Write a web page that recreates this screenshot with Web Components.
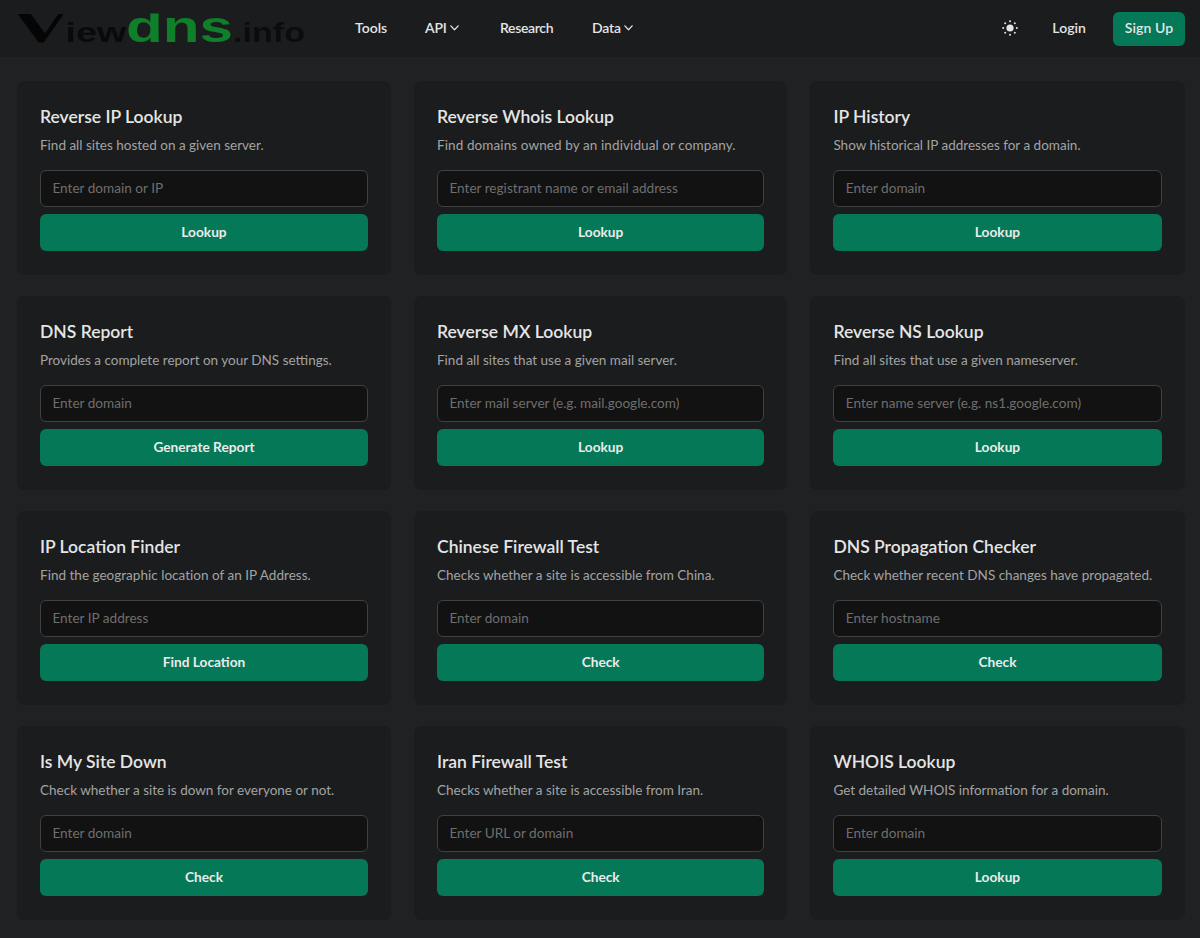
<!DOCTYPE html>
<html><head><meta charset="utf-8"><style>
html,body{margin:0;padding:0;background:#1f2123;}
body{font-family:Lato,"Noto Sans",sans-serif;color:#e5e5e5;}
</style></head><body>
<site-nav></site-nav>
<tool-grid>
<tool-card name="Reverse IP Lookup" desc="Find all sites hosted on a given server." ph="Enter domain or IP" btn="Lookup"></tool-card>
<tool-card name="Reverse Whois Lookup" ds="0.1" desc="Find domains owned by an individual or company." ph="Enter registrant name or email address" btn="Lookup"></tool-card>
<tool-card name="IP History" desc="Show historical IP addresses for a domain." ph="Enter domain" btn="Lookup"></tool-card>
<tool-card name="DNS Report" desc="Provides a complete report on your DNS settings." ph="Enter domain" btn="Generate Report"></tool-card>
<tool-card name="Reverse MX Lookup" desc="Find all sites that use a given mail server." ph="Enter mail server (e.g. mail.google.com)" btn="Lookup"></tool-card>
<tool-card name="Reverse NS Lookup" desc="Find all sites that use a given nameserver." ph="Enter name server (e.g. ns1.google.com)" btn="Lookup"></tool-card>
<tool-card name="IP Location Finder" ds="0.02" desc="Find the geographic location of an IP Address." ph="Enter IP address" btn="Find Location"></tool-card>
<tool-card name="Chinese Firewall Test" desc="Checks whether a site is accessible from China." ph="Enter domain" btn="Check"></tool-card>
<tool-card name="DNS Propagation Checker" desc="Check whether recent DNS changes have propagated." ph="Enter hostname" btn="Check"></tool-card>
<tool-card name="Is My Site Down" desc="Check whether a site is down for everyone or not." ph="Enter domain" btn="Check"></tool-card>
<tool-card name="Iran Firewall Test" desc="Checks whether a site is accessible from Iran." ph="Enter URL or domain" btn="Check"></tool-card>
<tool-card name="WHOIS Lookup" desc="Get detailed WHOIS information for a domain." ph="Enter domain" btn="Lookup"></tool-card>
</tool-grid>
<script>
const chev='<svg width="9" height="9" viewBox="0 0 16 16" fill="none" stroke="currentColor" stroke-width="2.2" stroke-linecap="round" stroke-linejoin="round"><path d="M1.5 5 8 12l6.5-7"/></svg>';
class SiteNav extends HTMLElement{constructor(){super();this.attachShadow({mode:'open'}).innerHTML=`<style>
:host{display:flex;align-items:center;height:57px;background:#1a1c1e;box-sizing:border-box;font-size:14px;font-weight:600;color:#e5e5e5;padding-bottom:2px}
.logo{width:292px;height:40px;margin-left:16px;flex:none;display:block;overflow:visible;filter:blur(.45px);position:relative;top:1px}
.links{display:flex;align-items:center;margin-left:47px}
.links a{display:flex;align-items:center;gap:3px}
.tools{width:70px}.api{width:75px;letter-spacing:-.2px}.res{width:92px;letter-spacing:-.35px}.data{letter-spacing:-.2px}
.right{margin-left:auto;display:flex;align-items:center}
.sun{width:16px;height:16px;display:block;margin-right:34px}
.login{margin-right:27px;letter-spacing:.05px}
.up{background:#047857;border-radius:6px;height:34px;width:72px;display:flex;align-items:center;justify-content:center;margin-right:15px;position:relative;top:1px;letter-spacing:.1px}
.up span{position:relative;top:-1px}
</style>
<svg class="logo" viewBox="0 0 292 40">
<defs><clipPath id="vc"><rect x="0" y="5" width="60" height="35"/></clipPath><clipPath id="dc"><rect x="105" y="4.6" width="120" height="35"/></clipPath></defs>
<g clip-path="url(#vc)"><text x="-4" y="33" font-family="Liberation Serif" font-size="47" fill="#050505" textLength="58" lengthAdjust="spacingAndGlyphs">V</text></g>
<g font-family="Liberation Sans">
<text x="49.5" y="33" font-size="27" fill="#070707" fill-opacity=".85" textLength="61" lengthAdjust="spacingAndGlyphs">iew</text>
<g clip-path="url(#dc)"><text x="110" y="33" font-size="44" font-weight="700" fill="#0f7f2a" textLength="107" lengthAdjust="spacingAndGlyphs">dns</text></g>
<text x="217" y="33" font-size="27" fill="#070707" fill-opacity=".75" textLength="72" lengthAdjust="spacingAndGlyphs">.info</text>
</g></svg>
<div class="links"><a class="tools">Tools</a><a class="api">API ${chev}</a><a class="res">Research</a><a class="data">Data ${chev}</a></div>
<div class="right"><svg class="sun" viewBox="0 0 16 16" fill="#e5e5e5"><circle cx="8" cy="8" r="3.6"/><g><circle cx="8" cy="1.2" r="1"/><circle cx="8" cy="14.8" r="1"/><circle cx="1.2" cy="8" r="1"/><circle cx="14.8" cy="8" r="1"/><circle cx="3.2" cy="3.2" r="1"/><circle cx="12.8" cy="3.2" r="1"/><circle cx="3.2" cy="12.8" r="1"/><circle cx="12.8" cy="12.8" r="1"/></g></svg><a class="login">Login</a><a class="up"><span>Sign Up</span></a></div>`;}}
customElements.define('site-nav',SiteNav);
class ToolGrid extends HTMLElement{constructor(){super();this.attachShadow({mode:'open'}).innerHTML=`<style>
:host{display:grid;grid-template-columns:374px 373.4px 374.2px;gap:21px 23px;padding:24px 0 18px 17px}
</style><slot></slot>`;}}
customElements.define('tool-grid',ToolGrid);
class ToolCard extends HTMLElement{connectedCallback(){if(this.shadowRoot)return;const g=k=>this.getAttribute(k);this.attachShadow({mode:'open'}).innerHTML=`<style>
:host{display:block;background:#1a1c1e;border-radius:8px;padding:23px;height:194px;box-sizing:border-box}
h3{margin:0;font-size:17.5px;line-height:25px;font-weight:600;color:#e5e5e5}
p{margin:6px 0 0;font-size:13.5px;line-height:20px;color:#a3a3a3;letter-spacing:${g('ds')||0}px}
.i{margin-top:15px;height:36.6px;box-sizing:border-box;border:1px solid #404040;border-radius:6px;background:#121212;display:flex;align-items:center;padding:0 11.4px 1px;font-size:13.6px;color:#6e6e6e}
.b{margin-top:7.4px;height:37px;padding-bottom:1px;box-sizing:border-box;background:#047857;border-radius:6px;display:flex;align-items:center;justify-content:center;font-size:13.7px;font-weight:700;color:#ebebeb}
</style><h3>${g('name')}</h3><p>${g('desc')}</p><div class="i">${g('ph')}</div><div class="b">${g('btn')}</div>`;}}
customElements.define('tool-card',ToolCard);
</script></body></html>
